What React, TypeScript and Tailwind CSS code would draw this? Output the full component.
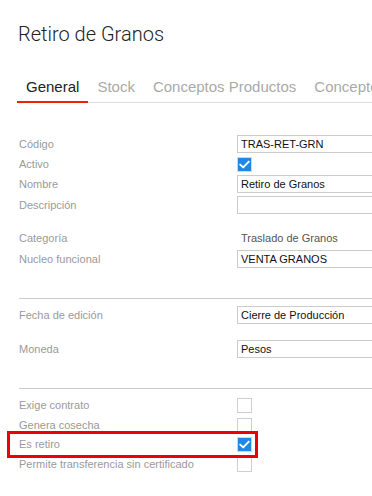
import type { ReactNode } from "react";

const labelFont = { fontFamily: '"Liberation Sans", Arial, sans-serif' };

function Check({ checked }: { checked?: boolean }) {
  if (!checked) {
    return <span className="block h-[15px] w-[15px] shrink-0 border border-[#cfcfcf] bg-white" />;
  }
  return (
    <span className="grid h-[15px] w-[15px] shrink-0 place-items-center border border-[#c9d9e8] bg-[#1e88e5]">
      <svg width="11" height="9" viewBox="0 0 11 9" fill="none">
        <path d="M1.2 4.6 L4.2 7.4 L9.8 1.6" stroke="white" strokeWidth="1.9" strokeLinecap="round" strokeLinejoin="round" />
      </svg>
    </span>
  );
}

function Input({ value }: { value?: string }) {
  return (
    <div className="flex h-[18px] w-[160px] shrink-0 items-center border border-[#cccccc] bg-white pl-[3px] text-[11px] text-[#111]">
      {value}
    </div>
  );
}

function Row({ label, className, children }: { label: string; className: string; children: ReactNode }) {
  return (
    <div className={["flex items-center", className].join(" ")}>
      <div className="w-[218px] shrink-0 text-[11px] text-[#9a9a9a]">{label}</div>
      {children}
    </div>
  );
}

export default function App() {
  const tabs = ["General", "Stock", "Conceptos Productos", "Conceptos"];

  return (
    <div className="relative h-[496px] w-[372px] overflow-hidden bg-white" style={labelFont}>
      <h1
        className="ml-[18px] mt-[22px] h-[24px] text-[20px] font-light leading-[24px] text-[#222]"
        style={{ fontFamily: "Roboto, sans-serif" }}
      >
        Retiro de Granos
      </h1>

      <div className="ml-[17px] mt-[32px] flex w-[400px] border-b border-[#dddddd]">
        {tabs.map((tab, i) => (
          <div
            key={tab}
            className={[
              "-mb-px shrink-0 whitespace-nowrap px-[9px] pb-[5px] text-[15px] leading-[18px]",
              i === 0 ? "border-b-2 border-[#ee2200] text-[#222]" : "border-b-2 border-transparent text-[#aaaaaa]",
            ].join(" ")}
          >
            {tab}
          </div>
        ))}
      </div>

      <div className="pl-[19px]">
        <Row label="Código" className="mt-[32px] h-[18px]">
          <Input value="TRAS-RET-GRN" />
        </Row>
        <Row label="Activo" className="h-[22px]">
          <Check checked />
        </Row>
        <Row label="Nombre" className="h-[18px]">
          <Input value="Retiro de Granos" />
        </Row>
        <Row label="Descripción" className="mt-[3px] h-[18px]">
          <Input />
        </Row>

        <Row label="Categoría" className="mt-[15px] h-[18px]">
          <span className="pl-[4px] text-[11px] text-[#555]">Traslado de Granos</span>
        </Row>
        <Row label="Nucleo funcional" className="mt-[3px] h-[18px]">
          <Input value="VENTA GRANOS" />
        </Row>

        <div className="mt-[30px] h-px bg-[#cccccc]" />

        <Row label="Fecha de edición" className="mt-[7px] h-[18px]">
          <Input value="Cierre de Producción" />
        </Row>
        <Row label="Moneda" className="mt-[16px] h-[18px]">
          <Input value="Pesos" />
        </Row>

        <div className="mt-[30px] h-px bg-[#cccccc]" />

        <Row label="Exige contrato" className="mt-[6px] h-[20px]">
          <Check />
        </Row>
        <Row label="Genera cosecha" className="h-[20px]">
          <Check />
        </Row>
        <Row label="Es retiro" className="h-[19px]">
          <Check checked />
        </Row>
        <Row label="Permite transferencia sin certificado" className="h-[20px]">
          <Check />
        </Row>
      </div>

      <div className="absolute left-[7px] top-[431px] h-[27px] w-[251px] border-[3px] border-[#ee0000]" />
    </div>
  );
}
